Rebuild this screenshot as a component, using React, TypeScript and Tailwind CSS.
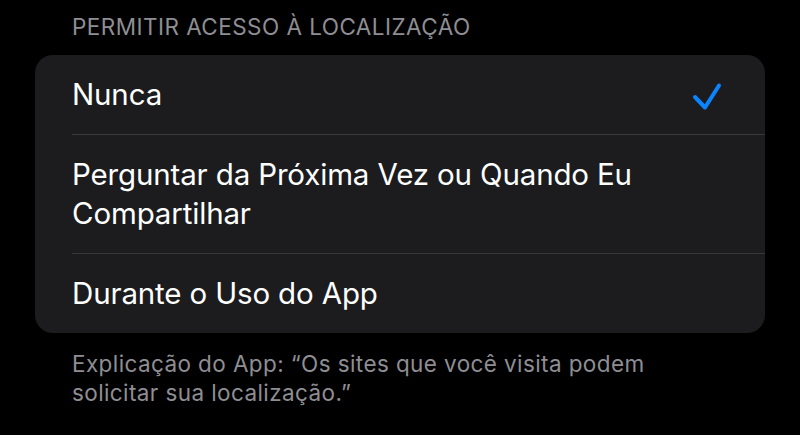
const options = [
  { label: 'Nunca', selected: true },
  { label: 'Perguntar da Próxima Vez ou Quando Eu Compartilhar', selected: false },
  { label: 'Durante o Uso do App', selected: false },
]

function Checkmark() {
  return (
    <svg
      className="w-[34px] h-[34px] text-[#0a84ff]"
      viewBox="0 0 34 34"
      fill="none"
      stroke="currentColor"
      strokeWidth={4}
      strokeLinecap="round"
      strokeLinejoin="round"
    >
      <path d="M7 19 L17 29.5 L31 7.5" />
    </svg>
  )
}

export default function App() {
  return (
    <div className="min-h-screen w-full bg-black pt-[9px] px-[35px] font-['Inter',sans-serif] antialiased">
      {/* Section header */}
      <p className="pl-[37px] text-[22.5px] leading-[36px] tracking-[0.45px] text-[#8e8e93] uppercase mb-[10px]">
        Permitir acesso à localização
      </p>

      {/* Options card */}
      <div className="rounded-[18px] bg-[#1c1c1e] overflow-hidden">
        {options.map((opt, i) => (
          <div key={opt.label} className="pl-[37px]">
            <div
              className={
                'flex items-center pr-[43px] py-[20px] ' +
                (i < options.length - 1 ? 'border-b border-[#38383a]' : '')
              }
            >
              <span className="flex-1 text-[29.5px] leading-[39px] tracking-[-0.15px] text-white pr-[80px]">
                {opt.label}
              </span>
              {opt.selected && <Checkmark />}
            </div>
          </div>
        ))}
      </div>

      {/* Footer */}
      <p className="pl-[37px] pr-[100px] pt-[16px] text-[22.5px] leading-[29px] tracking-[0.4px] text-[#8e8e93]">
        Explicação do App: “Os sites que você visita podem solicitar sua localização.”
      </p>
    </div>
  )
}
